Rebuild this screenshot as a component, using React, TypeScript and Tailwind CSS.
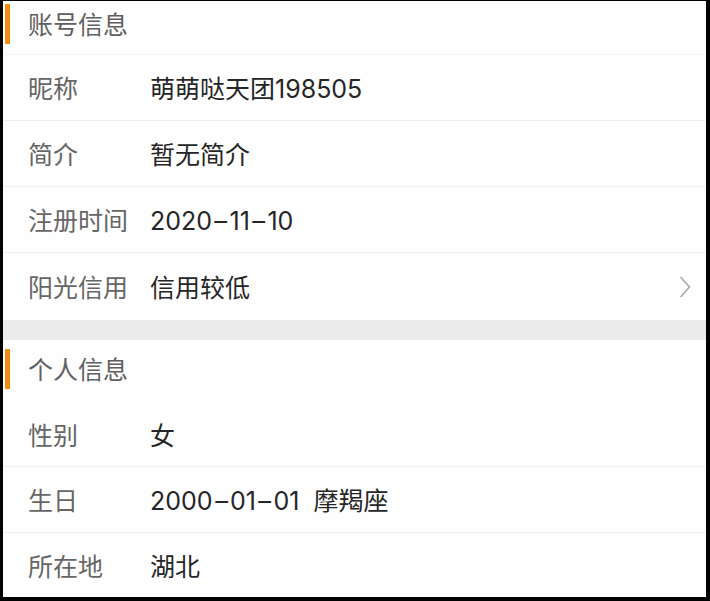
import React from 'react';

const font = { fontFamily: '"Noto Sans CJK SC", "Noto Sans", sans-serif' };
const valueFont = { fontFamily: 'Inter, "Noto Sans CJK SC", sans-serif' };

// the screenshot's font draws a long dash for '-', so widen it a little
const renderValue = (value: string) =>
  value.split('-').map((part, i) => (
    <React.Fragment key={i}>
      {i > 0 && <span className="mx-[3px] inline-block scale-x-[1.6]">-</span>}
      {part}
    </React.Fragment>
  ));

interface RowProps {
  label: string;
  value: string;
  height: string;
  divider?: boolean;
  arrow?: boolean;
}

const Row: React.FC<RowProps> = ({ label, value, height, divider = true, arrow = false }) => (
  <div className={`flex items-center pl-[25px] pr-[15px] ${height} ${divider ? 'border-b border-[#efefef]' : ''}`}>
    <div className="flex flex-1 items-baseline pt-[3px]">
      <span className="w-[122px] shrink-0 text-[25px] text-[#666666]">{label}</span>
      <span className="flex-1 whitespace-pre text-[25px] text-[#262626]" style={valueFont}>
        {renderValue(value)}
      </span>
    </div>
    {arrow && (
      <svg width="12" height="22" viewBox="0 0 12 22" className="shrink-0">
        <polyline points="1.5,1 10.5,11 1.5,21" fill="none" stroke="#a8a8a8" strokeWidth="1.6" />
      </svg>
    )}
  </div>
);

const SectionHeader: React.FC<{ title: string; className: string; barTop: string }> = ({ title, className, barTop }) => (
  <div className={`flex items-start ${className}`}>
    <div className={`ml-[2px] flex items-center ${barTop}`}>
      <div className="h-[40px] w-[5px] bg-[#f08c0f]" />
      <span className="ml-[18px] text-[25px] text-[#5f5f5f]">{title}</span>
    </div>
  </div>
);

export default function App() {
  return (
    <div className="h-[601px] w-[710px] bg-black pb-[4px] pl-[3px] pr-[4px] pt-[1px]" style={font}>
      <div className="flex h-full flex-col bg-[#fefefe]">
        <SectionHeader title="账号信息" className="h-[54px] border-b border-[#f3f3f3]" barTop="pt-[3px]" />
        <Row label="昵称" value="萌萌哒天团198505" height="h-[66px]" />
        <Row label="简介" value="暂无简介" height="h-[66px]" />
        <Row label="注册时间" value="2020-11-10" height="h-[66px]" />
        <Row label="阳光信用" value="信用较低" height="h-[67px]" divider={false} arrow />
        <div className="h-[20px] bg-[#ebebeb]" />
        <SectionHeader title="个人信息" className="h-[62px]" barTop="pt-[9px]" />
        <Row label="性别" value="女" height="h-[65px]" />
        <Row label="生日" value="2000-01-01  摩羯座" height="h-[66px]" />
        <Row label="所在地" value="湖北" height="flex-1" divider={false} />
      </div>
    </div>
  );
}
